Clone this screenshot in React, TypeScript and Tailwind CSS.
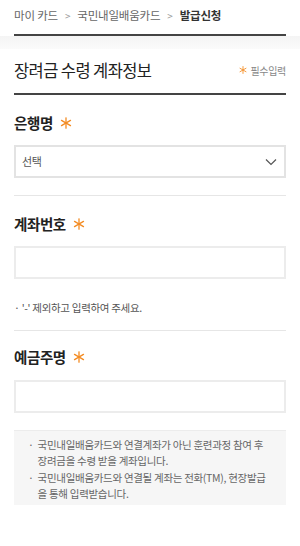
import React from "react";

const Star = ({ size = 12 }: { size?: number }) => (
  <svg width={size} height={size} viewBox="0 0 12 12" className="shrink-0">
    <g stroke="#f38b22" strokeWidth="1.3" strokeLinecap="round">
      <line x1="6" y1="0.8" x2="6" y2="11.2" />
      <line x1="1.5" y1="3.4" x2="10.5" y2="8.6" />
      <line x1="1.5" y1="8.6" x2="10.5" y2="3.4" />
    </g>
  </svg>
);

const Label = ({ text }: { text: string }) => (
  <div className="flex items-center gap-[7px] h-[20px]">
    <span className="text-[14.5px] font-bold text-[#222] tracking-[-0.4px]">{text}</span>
    <Star size={12} />
  </div>
);

const App = () => {
  return (
    <div
      className="w-[300px] h-[546px] bg-white overflow-hidden"
      style={{ fontFamily: '"Noto Sans CJK KR", "Noto Sans", sans-serif' }}
    >
      {/* breadcrumb */}
      <div className="px-[14px]">
        <div className="flex items-center h-[36px] border-b-2 border-[#444] text-[11.5px] text-[#666] tracking-[-0.2px] gap-[7px] pb-[3px]">
          <span>마이 카드</span>
          <span className="text-[#999] text-[10px]">&gt;</span>
          <span>국민내일배움카드</span>
          <span className="text-[#999] text-[10px]">&gt;</span>
          <span className="font-bold text-[#333]">발급신청</span>
        </div>
      </div>
      <div className="h-[13px] bg-gradient-to-b from-[#f4f4f4] to-[#fbfbfb]" />

      <div className="px-[14px]">
        {/* title */}
        <div className="flex items-center justify-between h-[46px] border-b-2 border-[#444] pb-[2px]">
          <span className="text-[16.5px] text-[#222] tracking-[-0.6px]">장려금 수령 계좌정보</span>
          <span className="flex items-center gap-[3px] text-[10px] text-[#888] tracking-[-0.3px]">
            <Star size={8} />
            필수입력
          </span>
        </div>

        {/* bank */}
        <div className="pt-[18px] pb-[17px] border-b border-[#e6e6e6]">
          <Label text="은행명" />
          <div className="mt-[12px] h-[33px] border-2 border-[#e3e3e3] flex items-center justify-between px-[6px]">
            <span className="text-[11px] text-[#555] tracking-[-0.3px]">선택</span>
            <svg width="12" height="8" viewBox="0 0 12 8" className="mr-[1px]">
              <polyline points="1,1.5 6,6.5 11,1.5" fill="none" stroke="#555" strokeWidth="1.2" />
            </svg>
          </div>
        </div>

        {/* account number */}
        <div className="pt-[18px] pb-[14px] border-b border-[#e6e6e6]">
          <Label text="계좌번호" />
          <div className="mt-[12px] h-[33px] border-2 border-[#ececec]" />
          <p className="mt-[21px] text-[10.5px] text-[#555] tracking-[-0.3px] leading-[16px]">
            · &apos;-&apos; 제외하고 입력하여 주세요.
          </p>
        </div>

        {/* holder */}
        <div className="pt-[16px]">
          <Label text="예금주명" />
          <div className="mt-[13px] h-[33px] border-2 border-[#ececec]" />
        </div>

        {/* notice */}
        <div className="mt-[17px] bg-[#f6f6f6] border-t border-[#ececec] pt-[6px] pb-[3px] pl-[14px] pr-[6px] text-[10.5px] text-[#666] leading-[16.3px] tracking-[-0.3px]">
          <div className="flex gap-[4px]">
            <span>·</span>
            <span className="whitespace-nowrap">
              국민내일배움카드와 연결계좌가 아닌 훈련과정 참여 후
              <br />
              장려금을 수령 받을 계좌입니다.
            </span>
          </div>
          <div className="flex gap-[4px]">
            <span>·</span>
            <span className="whitespace-nowrap">
              국민내일배움카드와 연결될 계좌는 전화(TM), 현장발급
              <br />
              을 통해 입력받습니다.
            </span>
          </div>
        </div>
      </div>
    </div>
  );
};

export default App;
